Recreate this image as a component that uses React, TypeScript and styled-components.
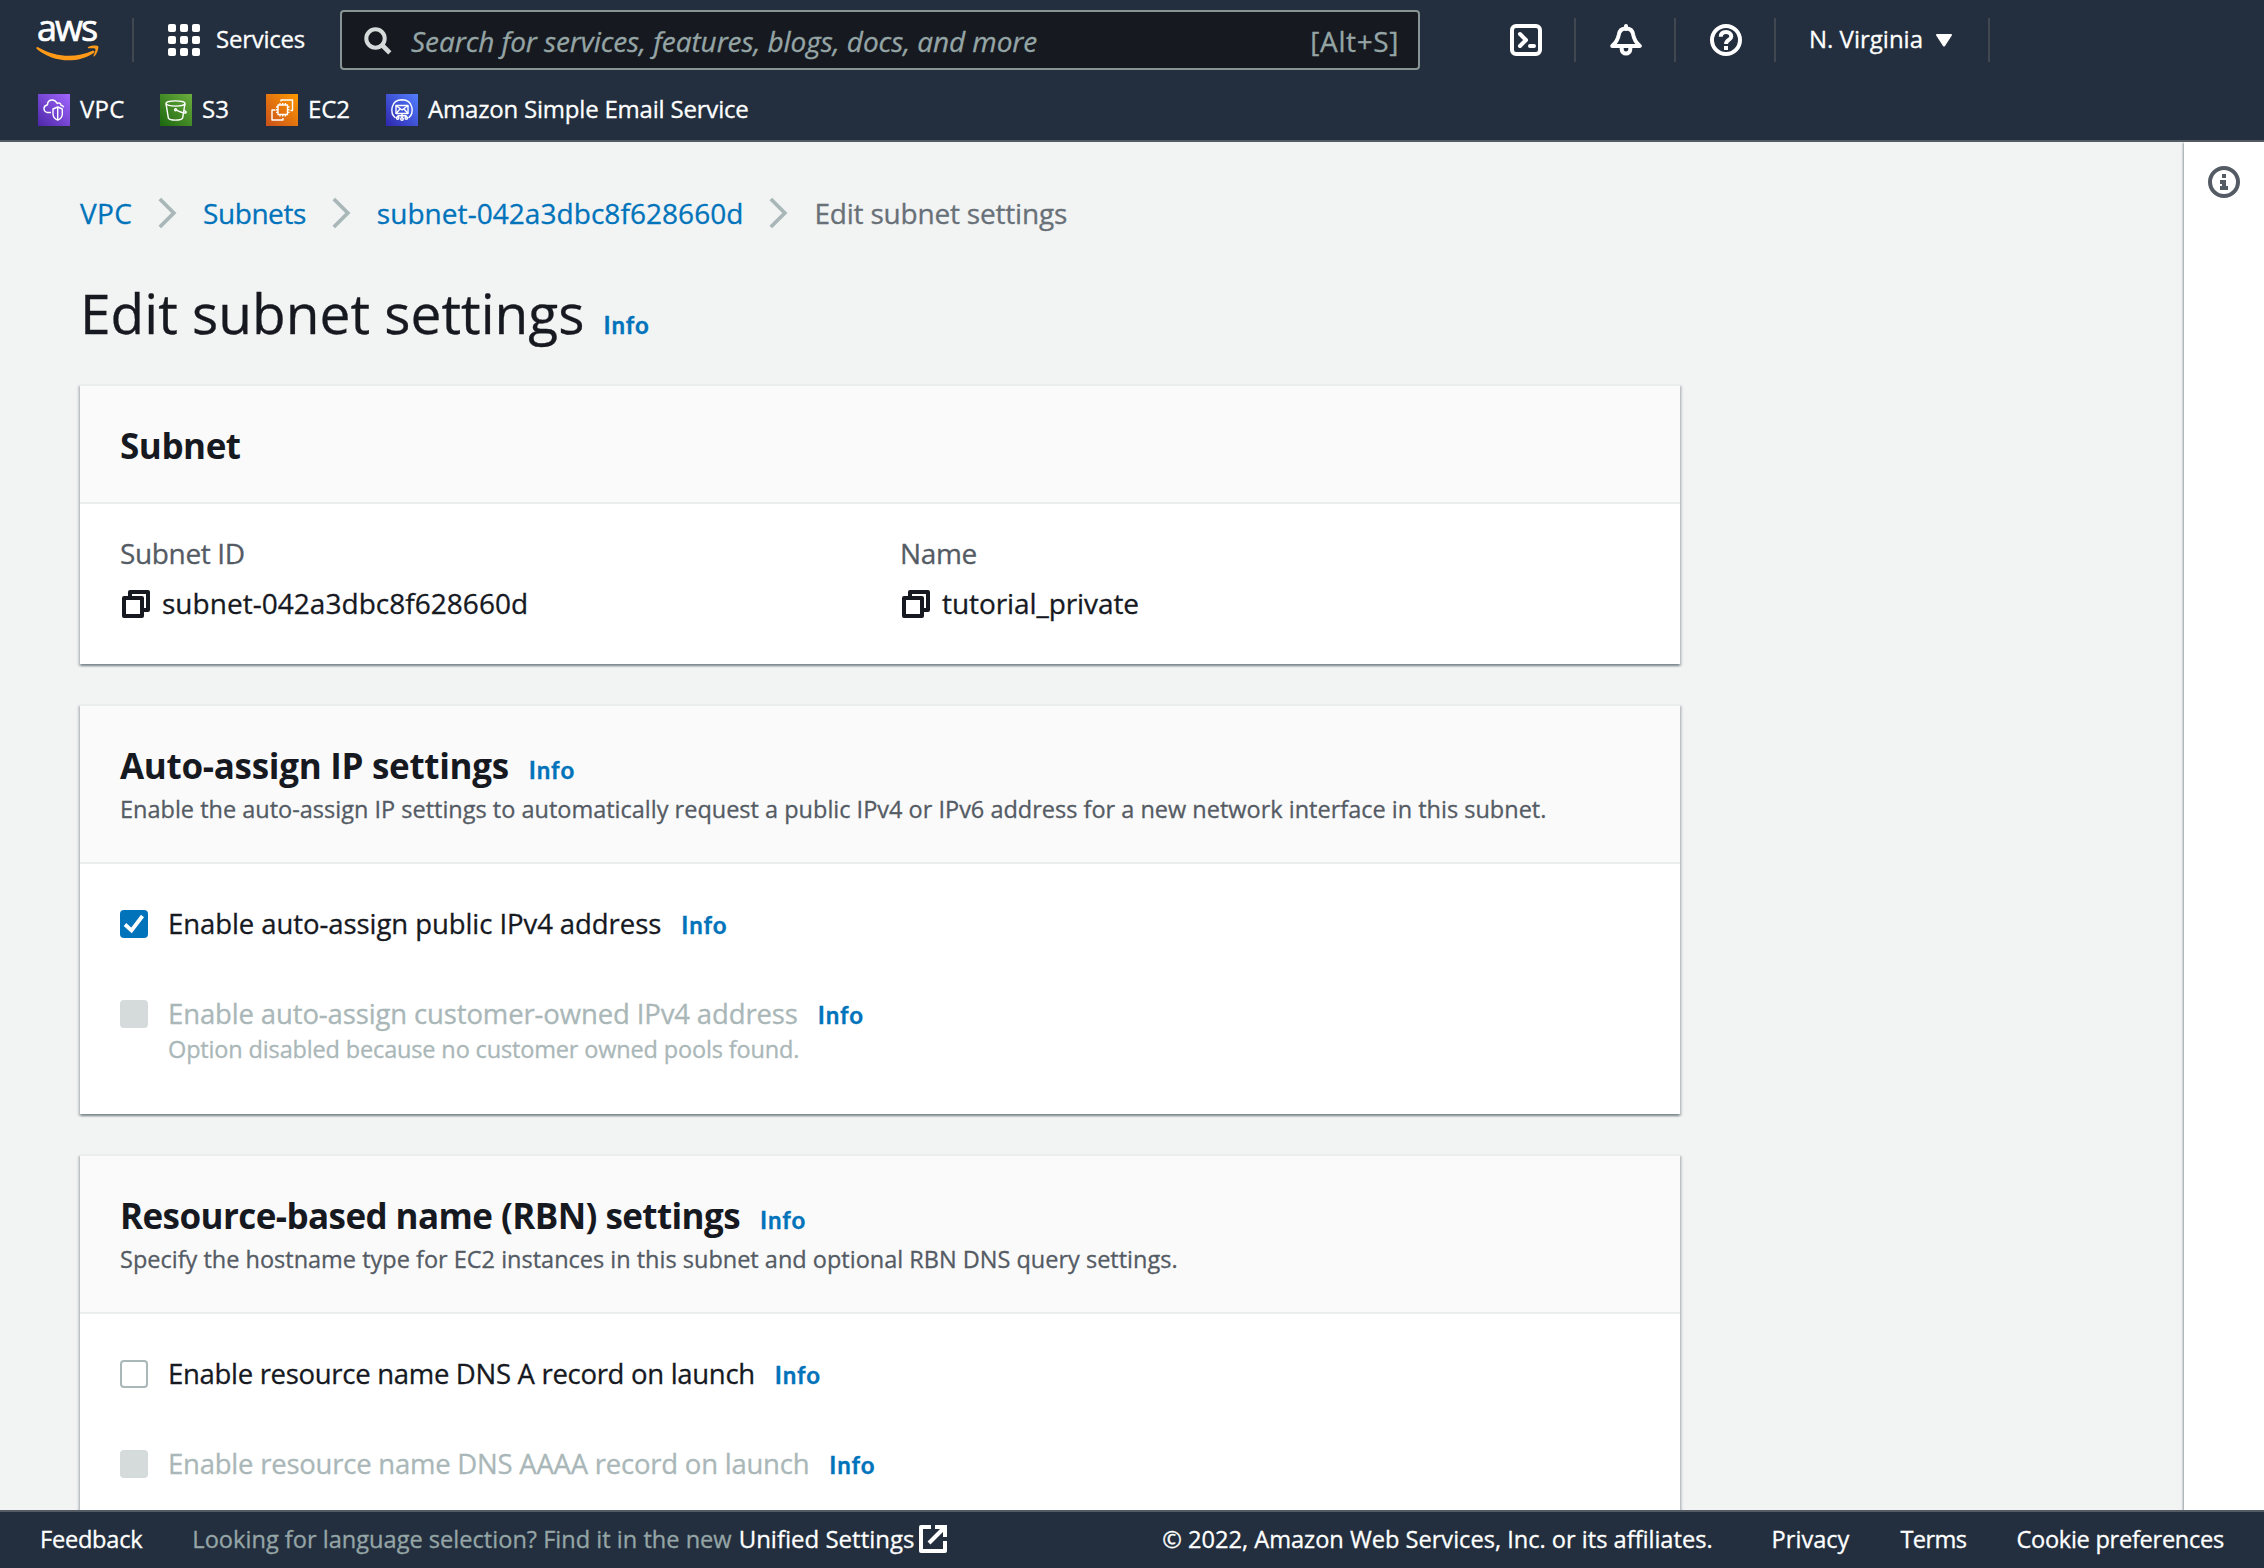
import React from "react";
import styled, { createGlobalStyle } from "styled-components";

const ink = "#16191f";
const muted = "#545b64";
const link = "#0073bb";
const navy = "#232f3e";
const disabled = "#aab7b8";

const GlobalStyle = createGlobalStyle`
  * { box-sizing: border-box; }
  html, body { margin: 0; padding: 0; }
  body {
    font-family: "Open Sans", "Noto Sans", sans-serif;
    font-size: 28px;
    color: ${ink};
    background: #f2f3f3;
    -webkit-text-stroke: 0.3px;
  }
  svg { display: block; flex: none; }
  h1, h2, p { margin: 0; }
  a { text-decoration: none; }
`;

const Page = styled.div`
  width: 2264px;
  height: 1568px;
  display: flex;
  flex-direction: column;
  overflow: hidden;
`;

/* ---------- header ---------- */

const Header = styled.header`
  flex: none;
  height: 142px;
  background: ${navy};
  border-bottom: 2px solid ${muted};
  color: #fff;
`;

const NavRow = styled.div`
  display: flex;
  align-items: center;
  height: 80px;
  padding-left: 36px;
`;

const Logo = styled.div`
  width: 64px;
  height: 44px;
  display: flex;
  flex-direction: column;
  align-items: flex-start;
`;

const LogoWord = styled.span`
  height: 27px;
  line-height: 20px;
  padding-left: 1px;
  font-size: 36px;
  font-weight: 500;
  letter-spacing: -2px;
  -webkit-text-stroke: 0.7px;
`;

const Divider = styled.span<{ $left?: number }>`
  flex: none;
  width: 2px;
  height: 44px;
  margin-left: ${(p) => p.$left ?? 0}px;
  background: #414750;
`;

const ServicesButton = styled.div`
  display: flex;
  align-items: center;
  gap: 16px;
  width: 172px;
  margin-left: 34px;
  font-size: 24px;
  line-height: 36px;
  letter-spacing: -0.25px;
  white-space: nowrap;
`;

const GridDots = styled.span`
  display: grid;
  grid-template-columns: repeat(3, 8px);
  gap: 4px;
`;

const Dot = styled.i`
  height: 8px;
  border-radius: 2px;
  background: #fff;
`;

const NavText = styled.span`
  padding-bottom: 2px;
`;

const SearchBox = styled.div`
  flex: none;
  display: flex;
  align-items: center;
  width: 1080px;
  height: 60px;
  padding: 2px 19px 0 22px;
  border: 2px solid #879596;
  border-radius: 4px;
  background: ${ink};
  color: #95a5a6;
`;

const Placeholder = styled.span`
  flex: 1;
  margin-left: 19px;
  font-style: italic;
  letter-spacing: -0.08px;
`;

const Shortcut = styled.span`
  letter-spacing: 0.6px;
`;

const Tools = styled.div`
  display: flex;
  margin-left: 56px;
`;

const ToolCell = styled.div<{ $width: number }>`
  display: flex;
  align-items: center;
  width: ${(p) => p.$width}px;
  height: 44px;
  padding-left: 34px;
  border-right: 2px solid #414750;
  font-size: 24px;
  line-height: 36px;
`;

const Region = styled.span`
  width: 127px;
  margin-left: -1px;
  padding-bottom: 2px;
`;

const Favorites = styled.nav`
  display: flex;
  align-items: center;
  height: 60px;
  padding-left: 38px;
`;

const Favorite = styled.a<{ $width: number; $ls: number }>`
  display: flex;
  align-items: center;
  gap: 10px;
  width: ${(p) => p.$width}px;
  color: #fff;
  font-size: 24px;
  line-height: 34px;
  letter-spacing: ${(p) => p.$ls}px;
  white-space: nowrap;
`;

/* ---------- body ---------- */

const Body = styled.div`
  flex: 1;
  min-height: 0;
  display: flex;
`;

const Main = styled.main`
  flex: 1;
  padding: 49px 0 0 80px;
  overflow: hidden;
`;

const HelpRail = styled.aside`
  width: 80px;
  padding: 24px 0 0 24px;
  background: #fff;
  box-shadow: -1px 1px 2px 0 rgba(0, 28, 36, 0.4);
`;

const Breadcrumbs = styled.nav`
  display: flex;
  align-items: center;
  height: 44px;
`;

const Crumb = styled.span<{ $current?: boolean; $ls: number }>`
  line-height: 44px;
  letter-spacing: ${(p) => p.$ls}px;
  color: ${(p) => (p.$current ? "#687078" : link)};
`;

const CrumbArrow = styled.svg`
  margin: 0 26px 0 26px;
`;

const TitleRow = styled.div`
  display: flex;
  align-items: baseline;
  height: 149px;
  padding-top: 42px;
`;

const Title = styled.h1`
  font-size: 55px;
  line-height: 72px;
  font-weight: 400;
  letter-spacing: 0.02px;
`;

const Info = styled.a<{ $gap?: number }>`
  margin-left: ${(p) => p.$gap ?? 20}px;
  color: ${link};
  font-family: Lato, "Open Sans", sans-serif;
  font-size: 24px;
  font-weight: 700;
  letter-spacing: 1px;
  line-height: 1;
`;

const Card = styled.section`
  width: 1600px;
  margin-bottom: 40px;
  border-top: 2px solid #eaeded;
  background: #fff;
  box-shadow:
    0 2px 2px 0 rgba(0, 28, 36, 0.3),
    2px 2px 2px 0 rgba(0, 28, 36, 0.15),
    -2px 2px 2px 0 rgba(0, 28, 36, 0.15);
`;

const CardHeader = styled.div<{ $height: number }>`
  height: ${(p) => p.$height}px;
  padding: 38px 40px 0;
  background: #fafafa;
  border-bottom: 2px solid #eaeded;
`;

const HeadingRow = styled.div`
  display: flex;
  align-items: baseline;
`;

const Heading = styled.h2<{ $ls: number }>`
  font-size: 35px;
  line-height: 44px;
  font-weight: 700;
  letter-spacing: ${(p) => p.$ls}px;
  -webkit-text-stroke: 0;
`;

const Description = styled.p`
  margin-top: 3px;
  font-size: 23.5px;
  line-height: 36px;
  color: ${muted};
`;

const CardBody = styled.div<{ $height: number }>`
  height: ${(p) => p.$height}px;
  padding: 0 40px;
`;

const Columns = styled.div`
  display: grid;
  grid-template-columns: 780px 1fr;
  padding-top: 27px;
`;

const FieldLabel = styled.div`
  line-height: 44px;
  color: ${muted};
  letter-spacing: -0.35px;
`;

const FieldValue = styled.div<{ $ls: number }>`
  display: flex;
  align-items: center;
  gap: 12px;
  margin-top: 6px;
  padding-left: 2px;
  line-height: 44px;
  letter-spacing: ${(p) => p.$ls}px;

  svg { margin-top: 2px; }
`;

const Option = styled.div<{ $top: number }>`
  display: flex;
  align-items: flex-start;
  gap: 20px;
  padding-top: ${(p) => p.$top}px;
`;

const CheckSlot = styled.span`
  padding-top: 8px;
`;

const Box = styled.span<{ $state: "checked" | "empty" | "disabled" }>`
  display: flex;
  align-items: center;
  justify-content: center;
  width: 28px;
  height: 28px;
  border-radius: 4px;
  border: ${(p) => (p.$state === "empty" ? "2px solid #aab7b8" : "none")};
  background: ${(p) =>
    p.$state === "checked" ? link : p.$state === "disabled" ? "#d5dbdb" : "#fff"};
`;

const OptionLine = styled.div`
  display: flex;
  align-items: baseline;
  height: 42px;
  padding-top: 1px;
`;

const OptionLabel = styled.span<{ $disabled?: boolean; $ls: number }>`
  font-size: 27.5px;
  line-height: 42px;
  letter-spacing: ${(p) => p.$ls}px;
  color: ${(p) => (p.$disabled ? disabled : ink)};
`;

const OptionHint = styled.p`
  margin-top: -3px;
  font-size: 23.5px;
  line-height: 36px;
  letter-spacing: -0.15px;
  color: ${disabled};
`;

/* ---------- footer ---------- */

const Footer = styled.footer`
  flex: none;
  display: flex;
  align-items: center;
  height: 58px;
  padding: 0 40px 3px;
  background: ${navy};
  border-top: 2px solid ${muted};
  color: #fff;
  font-size: 23.6px;
  line-height: 36px;
  white-space: nowrap;
`;

const FooterNote = styled.span`
  margin-left: 50px;
  color: #95a5a6;
`;

const FooterLink = styled.a<{ $gap: number; $ls?: number; $size?: number }>`
  margin-left: ${(p) => p.$gap}px;
  font-size: ${(p) => p.$size ?? 23.6}px;
  letter-spacing: ${(p) => p.$ls ?? 0}px;
  color: #fff;
`;

const ExternalMark = styled.svg`
  margin-left: 5px;
`;

const FooterRight = styled.div`
  display: flex;
  margin-left: auto;
`;

/* ---------- drawings ---------- */

const Smile = () => (
  <svg width="63" height="17" viewBox="0 0 63 17">
    <path
      d="M.4 2.6C.9 1.7 1.700 2 2.600 2.500C21 13 40 13 56.500 5.800C58.200 5.100 59.300 6.700 57.700 7.900C41.500 19 17 17.800 .5 3.800Z"
      fill="#ff9a18"
    />
    <path
      d="M52.200 2C56 -.2 61.600 .2 62.200 1.200C63 2.800 61.200 8.800 58.500 11.200C57.800 11.700 57.300 11.300 57.600 10.500C58.500 8.200 60 4.900 59.300 3.900C58.600 3 55 3.200 52.800 3.300C51.700 3.300 51.500 2.600 52.200 2Z"
      fill="#ff9a18"
    />
  </svg>
);

const SearchIcon = () => (
  <svg width="28" height="28" viewBox="0 0 28 28" fill="none" stroke="#d5dbdb">
    <circle cx="11.500" cy="11.500" r="9.200" strokeWidth="4" />
    <path d="M18 18L25.800 25.800" strokeWidth="4.600" />
  </svg>
);

const TerminalIcon = () => (
  <svg width="32" height="32" viewBox="0 0 32 32" fill="none" stroke="#fff" strokeWidth="4" strokeLinecap="round" strokeLinejoin="round">
    <rect x="2" y="2" width="28" height="28" rx="4" />
    <path d="M10 10l6 6-6 6" />
    <path d="M20 22h4" />
  </svg>
);

const BellIcon = () => (
  <svg width="32" height="32" viewBox="0 0 32 32" fill="none" stroke="#fff" strokeWidth="4" strokeLinejoin="round" strokeLinecap="round">
    <path d="M16 2v3" />
    <path d="M2.200 22C6 18.500 8 15.500 8.700 11C9.200 7 12 4.500 16 4.500S22.800 7 23.300 11C24 15.500 26 18.500 29.800 22Z" />
    <path d="M11.700 23v2.200a4.300 4.300 0 0 0 8.600 0V23" />
  </svg>
);

const HelpIcon = () => (
  <svg width="32" height="32" viewBox="0 0 32 32" fill="none" stroke="#fff" strokeWidth="4">
    <circle cx="16" cy="16" r="14" />
    <path d="M10.800 12.800C10.800 9.600 13 8 16 8s5.300 1.700 5.300 4.500c0 3.500-5.300 3.500-5.300 7.500" />
    <path d="M16 22v4" />
  </svg>
);

const Caret = () => (
  <svg width="16" height="13" viewBox="0 0 16 13">
    <path d="M1 0h14c.9 0 1.300.8.800 1.500L9 11.900c-.5.800-1.500.8-2 0L.2 1.500C-.3.800.1 0 1 0Z" fill="#fff" />
  </svg>
);

const Arrow = () => (
  <CrumbArrow width="19" height="32" viewBox="0 0 19 32" fill="none" stroke={disabled} strokeWidth="3.800">
    <path d="M1.800 2L15.800 16L1.800 30" />
  </CrumbArrow>
);

const InfoCircle = () => (
  <svg width="32" height="32" viewBox="0 0 32 32" fill="none" stroke={muted} strokeWidth="4">
    <circle cx="16" cy="16" r="14" />
    <path d="M16 8v4" />
    <path d="M12 16h4v8M12 22h8" />
  </svg>
);

const CopyIcon = () => (
  <svg width="28" height="28" viewBox="0 0 28 28" fill="none" stroke={ink} strokeWidth="4" strokeLinejoin="round">
    <path d="M8 6V2h18v18h-4" />
    <rect x="2" y="8" width="18" height="18" />
  </svg>
);

const ExternalIcon = () => (
  <ExternalMark width="28" height="28" viewBox="0 0 28 28" fill="none" stroke="#fff" strokeWidth="4" strokeLinejoin="round">
    <path d="M12 2H2v24h24V16" />
    <path d="M16 2h10v10" strokeLinejoin="miter" />
    <path d="M25 3L10 18" />
  </ExternalMark>
);

const CheckMark = () => (
  <svg width="28" height="28" viewBox="0 0 28 28" fill="none" stroke="#fff" strokeWidth="3.800">
    <path d="M5 14.500L11.500 20.500L22.500 6" />
  </svg>
);

const Tile = ({ id, from, to, children }: { id: string; from: string; to: string; children: React.ReactNode }) => (
  <svg width="32" height="32" viewBox="0 0 32 32" fill="none" stroke="#fff" strokeWidth="1.400" strokeLinejoin="round">
    <defs>
      <linearGradient id={id} x1="0" y1="1" x2="1" y2="0">
        <stop offset="0" stopColor={from} />
        <stop offset="1" stopColor={to} />
      </linearGradient>
    </defs>
    <rect width="32" height="32" fill={`url(#${id})`} stroke="none" />
    {children}
  </svg>
);

const VpcTile = () => (
  <Tile id="tileVpc" from="#4d27a8" to="#a166ff">
    <path d="M13 18.500H9.500C7 18 6 16.500 6 14.500C6 12.400 7.500 11.300 9.500 10.800C9.500 7.500 11.800 6 14.300 6C16.500 6 18.200 7.500 19.200 9.500C21 8.300 22.800 9.300 23 11.200C24.500 11.400 25.300 12.200 25.800 13.200" />
    <path d="M19.700 13L24.300 15V20C24.300 23 22.500 25 19.700 26.200C17 25 15 23 15 20V15Z" />
    <path d="M19.700 13V26" />
  </Tile>
);

const S3Tile = () => (
  <Tile id="tileS3" from="#1b660f" to="#6cae3e">
    <ellipse cx="15.500" cy="9.500" rx="9.500" ry="2.600" />
    <path d="M6 9.700L8.400 24.200C10 26.800 21 26.800 22.600 24.200L25 9.700" />
    <path d="M16 15.800C19 17.300 24.500 19.600 26 18.800C26.700 18 25.500 17.200 23.900 16.400" />
    <circle cx="15.600" cy="15.700" r="1" />
  </Tile>
);

const Ec2Tile = () => (
  <Tile id="tileEc2" from="#c8511b" to="#ff9900">
    <rect x="12" y="11" width="9.500" height="9.500" />
    <path d="M14 11V9M16.700 11V9M19.400 11V9M14 22.500V20.500M16.700 22.500V20.500M19.400 22.500V20.500M10 13H12M10 15.700H12M10 18.400H12M21.500 13h2M21.500 15.700h2M21.500 18.400h2" />
    <path d="M15 7.500V6H26.500V16.500H24.500M9.500 16H6V26H17V24" />
  </Tile>
);

const SesTile = () => (
  <Tile id="tileSes" from="#2e27ad" to="#527fff">
    <path d="M9.500 24C3.500 19 4.500 6 16 5.800C27.500 6 28.500 19 22.500 24" />
    <rect x="10" y="11.500" width="12" height="8" />
    <path d="M10 11.500L16 16L22 11.500M10 19.500L14 15M22 19.500L18 15" />
    <path d="M16 19.500V24M12 23.500V21.800H20V23.500" />
    <circle cx="16" cy="25" r="1.300" />
    <circle cx="11.700" cy="24" r="1.200" />
    <circle cx="20.300" cy="24" r="1.200" />
  </Tile>
);

/* ---------- composed parts ---------- */

type CheckOptionProps = {
  state: "checked" | "empty" | "disabled";
  label: string;
  hint?: string;
  top: number;
  ls: number;
};

const CheckOption = ({ state, label, hint, top, ls }: CheckOptionProps) => (
  <Option $top={top}>
    <CheckSlot>
      <Box $state={state}>{state === "checked" && <CheckMark />}</Box>
    </CheckSlot>
    <div>
      <OptionLine>
        <OptionLabel $disabled={state === "disabled"} $ls={ls}>{label}</OptionLabel>
        <Info>Info</Info>
      </OptionLine>
      {hint && <OptionHint>{hint}</OptionHint>}
    </div>
  </Option>
);

export default function App() {
  return (
    <Page>
      <GlobalStyle />
      <Header>
        <NavRow>
          <Logo>
            <LogoWord>aws</LogoWord>
            <Smile />
          </Logo>
          <Divider $left={32} />
          <ServicesButton>
            <GridDots>
              {Array.from({ length: 9 }, (_, i) => (
                <Dot key={i} />
              ))}
            </GridDots>
            <NavText>Services</NavText>
          </ServicesButton>
          <SearchBox>
            <SearchIcon />
            <Placeholder>Search for services, features, blogs, docs, and more</Placeholder>
            <Shortcut>[Alt+S]</Shortcut>
          </SearchBox>
          <Tools>
            <ToolCell $width={100}><TerminalIcon /></ToolCell>
            <ToolCell $width={100}><BellIcon /></ToolCell>
            <ToolCell $width={100}><HelpIcon /></ToolCell>
            <ToolCell $width={214}>
              <Region>N. Virginia</Region>
              <Caret />
            </ToolCell>
          </Tools>
        </NavRow>
        <Favorites>
          <Favorite $width={122} $ls={0.2}><VpcTile /><NavText>VPC</NavText></Favorite>
          <Favorite $width={106} $ls={0.2}><S3Tile /><NavText>S3</NavText></Favorite>
          <Favorite $width={120} $ls={-0.1}><Ec2Tile /><NavText>EC2</NavText></Favorite>
          <Favorite $width={370} $ls={-0.2}><SesTile /><NavText>Amazon Simple Email Service</NavText></Favorite>
        </Favorites>
      </Header>

      <Body>
        <Main>
          <Breadcrumbs>
            <Crumb $ls={0.3}>VPC</Crumb>
            <Arrow />
            <Crumb $ls={-0.45}>Subnets</Crumb>
            <Arrow />
            <Crumb $ls={0.05}>subnet-042a3dbc8f628660d</Crumb>
            <Arrow />
            <Crumb $current $ls={-0.2}>Edit subnet settings</Crumb>
          </Breadcrumbs>
          <TitleRow>
            <Title>Edit subnet settings</Title>
            <Info $gap={19}>Info</Info>
          </TitleRow>

          <Card>
            <CardHeader $height={118}>
              <Heading $ls={-0.45}>Subnet</Heading>
            </CardHeader>
            <CardBody $height={160}>
              <Columns>
                <div>
                  <FieldLabel>Subnet ID</FieldLabel>
                  <FieldValue $ls={0.03}><CopyIcon />subnet-042a3dbc8f628660d</FieldValue>
                </div>
                <div>
                  <FieldLabel>Name</FieldLabel>
                  <FieldValue $ls={-0.08}><CopyIcon />tutorial_private</FieldValue>
                </div>
              </Columns>
            </CardBody>
          </Card>

          <Card>
            <CardHeader $height={158}>
              <HeadingRow>
                <Heading $ls={-0.3}>Auto-assign IP settings</Heading>
                <Info>Info</Info>
              </HeadingRow>
              <Description>
                Enable the auto-assign IP settings to automatically request a public IPv4 or IPv6 address for a new network interface in this subnet.
              </Description>
            </CardHeader>
            <CardBody $height={250}>
              <CheckOption state="checked" label="Enable auto-assign public IPv4 address" top={38} ls={-0.07} />
              <CheckOption
                state="disabled"
                label="Enable auto-assign customer-owned IPv4 address"
                hint="Option disabled because no customer owned pools found."
                top={48}
                ls={-0.13}
              />
            </CardBody>
          </Card>

          <Card>
            <CardHeader $height={158}>
              <HeadingRow>
                <Heading $ls={-0.58}>Resource-based name (RBN) settings</Heading>
                <Info>Info</Info>
              </HeadingRow>
              <Description>
                Specify the hostname type for EC2 instances in this subnet and optional RBN DNS query settings.
              </Description>
            </CardHeader>
            <CardBody $height={250}>
              <CheckOption state="empty" label="Enable resource name DNS A record on launch" top={38} ls={-0.3} />
              <CheckOption state="disabled" label="Enable resource name DNS AAAA record on launch" top={48} ls={-0.23} />
            </CardBody>
          </Card>
        </Main>
        <HelpRail>
          <InfoCircle />
        </HelpRail>
      </Body>

      <Footer>
        <FooterLink $gap={0} $ls={-0.25}>Feedback</FooterLink>
        <FooterNote>Looking for language selection? Find it in the new</FooterNote>
        <FooterLink $gap={7} $size={24}>Unified Settings</FooterLink>
        <ExternalIcon />
        <FooterRight>
          <span>© 2022, Amazon Web Services, Inc. or its affiliates.</span>
          <FooterLink $gap={59}>Privacy</FooterLink>
          <FooterLink $gap={51} $ls={-0.6}>Terms</FooterLink>
          <FooterLink $gap={50} $ls={-0.28}>Cookie preferences</FooterLink>
        </FooterRight>
      </Footer>
    </Page>
  );
}
